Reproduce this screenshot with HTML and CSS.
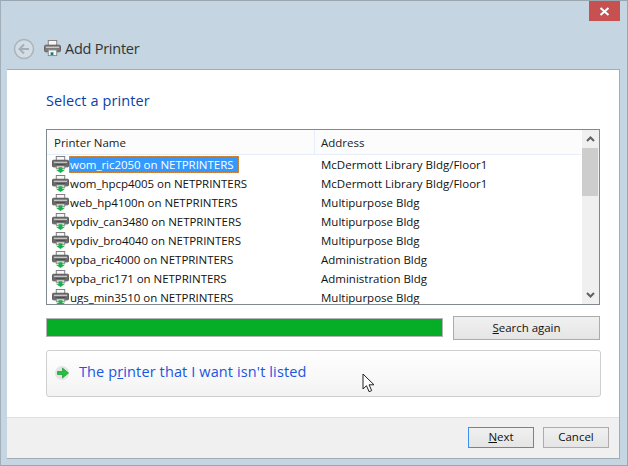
FILE: index.html
```html
<!DOCTYPE html>
<html lang="en">
<head>
<meta charset="utf-8">
<title>Add Printer</title>
<link rel="stylesheet" href="styles.css">
</head>
<body>
<svg width="0" height="0" class="defs">
  <symbol id="printer" viewBox="0 0 18 18">
    <rect x="4.500" y=".5" width="9" height="5" fill="#f6f6f6" stroke="#7a7a7a"/>
    <rect x=".5" y="4.500" width="17" height="7" rx="1" fill="#6a6a6a" stroke="#565656"/>
    <rect x="2" y="6" width="14" height="1.500" fill="#c4c4c4"/>
    <rect x="4" y="9" width="10" height="1" fill="#333"/>
    <rect x="4.500" y="10.500" width="9" height="2.500" fill="#f2f2f2" stroke="#808080"/>
    <path d="M7 12h4v2.500h3L9 18 4 14.500h3z" fill="#19b04a"/>
  </symbol>
  <symbol id="navprinter" viewBox="0 0 18 18">
    <rect x="4.500" y=".5" width="9" height="5.500" fill="#f6f6f6" stroke="#808080"/>
    <rect x=".5" y="5.500" width="17" height="7" rx="1.500" fill="#7a7a7a" stroke="#5f5f5f"/>
    <rect x="2" y="7" width="14" height="1.500" fill="#c8c8c8"/>
    <rect x="4.500" y="10.500" width="9" height="6" fill="#f6f6f6" stroke="#8a8a8a"/>
    <rect x="7" y="13" width="3" height="3" fill="#1d7f86"/>
  </symbol>
</svg>
<div class="window">
  <div class="titlebar"><div class="close"><svg width="11" height="9" viewBox="0 0 11 9"><path d="M1.500 1l8 7M9.500 1l-8 7" stroke="#fff" stroke-width="2"/></svg></div></div>
  <div class="navbar">
    <svg class="back" width="22" height="22" viewBox="0 0 22 22"><circle cx="11" cy="11" r="9.500" fill="#d3dde5" stroke="#aab4bb" stroke-width="1.500"/><path d="M16 11H7M11 6.500L6.500 11l4.500 4.500" fill="none" stroke="#a5afb6" stroke-width="2"/></svg>
    <svg class="navicon" width="17" height="17"><use href="#navprinter"/></svg>
    <span class="navtitle">Add Printer</span>
  </div>
  <div class="panel">
    <div class="content">
      <h1 class="heading">Select a printer</h1>
      <div class="listbox">
        <div class="listmain">
          <div class="header"><div class="colname">Printer Name</div><div class="coladdr">Address</div></div>
          <div class="rows">
            <div class="row"><svg class="ricon" width="17" height="17"><use href="#printer"/></svg><span class="name selected">wom_ric2050 on NETPRINTERS</span><span class="addr">McDermott Library Bldg/Floor1</span></div>
            <div class="row"><svg class="ricon" width="17" height="17"><use href="#printer"/></svg><span class="name">wom_hpcp4005 on NETPRINTERS</span><span class="addr">McDermott Library Bldg/Floor1</span></div>
            <div class="row"><svg class="ricon" width="17" height="17"><use href="#printer"/></svg><span class="name">web_hp4100n on NETPRINTERS</span><span class="addr">Multipurpose Bldg</span></div>
            <div class="row"><svg class="ricon" width="17" height="17"><use href="#printer"/></svg><span class="name">vpdiv_can3480 on NETPRINTERS</span><span class="addr">Multipurpose Bldg</span></div>
            <div class="row"><svg class="ricon" width="17" height="17"><use href="#printer"/></svg><span class="name">vpdiv_bro4040 on NETPRINTERS</span><span class="addr">Multipurpose Bldg</span></div>
            <div class="row"><svg class="ricon" width="17" height="17"><use href="#printer"/></svg><span class="name">vpba_ric4000 on NETPRINTERS</span><span class="addr">Administration Bldg</span></div>
            <div class="row"><svg class="ricon" width="17" height="17"><use href="#printer"/></svg><span class="name">vpba_ric171 on NETPRINTERS</span><span class="addr">Administration Bldg</span></div>
            <div class="row"><svg class="ricon" width="17" height="17"><use href="#printer"/></svg><span class="name">ugs_min3510 on NETPRINTERS</span><span class="addr">Multipurpose Bldg</span></div>
          </div>
        </div>
        <div class="scrollbar">
          <div class="sbtn"><svg width="9" height="6" viewBox="0 0 9 6"><path d="M1 5l3.500-3.500L8 5" fill="none" stroke="#606060" stroke-width="2"/></svg></div>
          <div class="thumb"></div>
          <div class="strack"></div>
          <div class="sbtn"><svg width="9" height="6" viewBox="0 0 9 6"><path d="M1 1l3.500 3.500L8 1" fill="none" stroke="#606060" stroke-width="2"/></svg></div>
        </div>
      </div>
      <div class="searchrow">
        <div class="progress"></div>
        <div class="btn search"><u>S</u>earch again</div>
      </div>
      <div class="notlisted">
        <svg class="arrow" width="16" height="16" viewBox="0 0 16 16"><circle cx="7" cy="8" r="7" fill="#e4e4e4"/><path d="M2.500 6.500h5V3l6 5-6 5V9.500h-5z" fill="#22c23c" stroke="#0f8f2a" stroke-width=".6"/></svg>
        <span class="linktext">The p<u>r</u>inter that I want isn't listed</span>
      </div>
    </div>
    <div class="footer">
      <div class="btn next"><span><u>N</u>ext</span></div>
      <div class="btn cancel">Cancel</div>
    </div>
  </div>
  <svg class="cursor" width="14" height="20" viewBox="0 0 14 20"><path d="M1 1v15l3.500-3.300 2.600 6 2.600-1.100-2.600-5.800h4.900z" fill="#fff" stroke="#222" stroke-width="1"/></svg>
</div>
</body>
</html>
```
FILE: styles.css
```css
* { box-sizing: border-box; }
html, body { margin: 0; padding: 0; }
body { width: 628px; height: 466px; overflow: hidden; font-family: "Open Sans", "Noto Sans", sans-serif; font-size: 11.500px; color: #111; }
.defs { position: absolute; }
.window { position: relative; width: 628px; height: 466px; display: flex; flex-direction: column; background: #c5d5e2; border: 1px solid #9aa7b1; border-left-color: #a3afb8; padding: 0 7px 6px 6px; }
.titlebar { height: 20px; display: flex; justify-content: flex-end; flex: none; }
.close { width: 31px; height: 20px; background: #c75050; display: flex; align-items: center; justify-content: center; }
.navbar { height: 48px; flex: none; display: flex; align-items: center; padding: 7px 0 0 6px; }
.back { margin-right: 9px; }
.navicon { margin-right: 4px; }
.navtitle { font-size: 14.500px; color: #333; letter-spacing: -.25px; }
.panel { flex: 1; display: flex; flex-direction: column; background: #fff; border: 1px solid #9fadb7; border-width: 1px 1px 1px 0; }
.content { flex: 1; padding: 20px 19px 0 39px; }
.heading { margin: 0 0 18px; font-weight: 400; font-size: 14.500px; line-height: 21px; color: #0a3fa8; letter-spacing: .1px; }
.listbox { height: 176px; display: flex; border: 1px solid #828790; background: #fff; }
.listmain { flex: 1; min-width: 0; overflow: hidden; }
.header { height: 25px; display: flex; background: #fcfcfc; border-bottom: 1px solid #e6eff8; margin-right: 1px; line-height: 26px; color: #222; }
.colname { width: 268px; padding-left: 7px; border-right: 1px solid #e6eff8; height: 24px; }
.coladdr { padding-left: 6px; }
.rows { height: 149px; overflow: hidden; }
.row { height: 19px; display: flex; align-items: center; padding-left: 5px; white-space: nowrap; }
.ricon { flex: none; }
.name { width: 252px; line-height: 17px; padding-left: 1px; flex: none; letter-spacing: -.03px; }
.name.selected { width: 170px; margin-right: 82px; background: #3399ff; color: #fff; outline: 1px dotted #d98a3a; outline-offset: -1px; }
.scrollbar { width: 17px; flex: none; display: flex; flex-direction: column; background: #f0f0f0; padding-right: 1px; }
.sbtn { height: 18px; display: flex; align-items: center; justify-content: center; flex: none; }
.thumb { height: 48px; background: #cdcdcd; flex: none; }
.strack { flex: 1; }
.searchrow { display: flex; justify-content: space-between; margin-top: 11px; }
.progress { width: 397px; height: 19px; margin-top: 2px; background: #06ae28; border: 1px solid #b4b4b4; }
.btn { border: 1px solid #acacac; background: linear-gradient(#f0f0f0, #e5e5e5); display: flex; align-items: center; justify-content: center; color: #111; padding-bottom: 2px; }
.search { width: 147px; height: 24px; letter-spacing: -.05px; }
.notlisted { margin-top: 10px; margin-right: -1px; height: 47px; border: 1px solid #cfcfcf; border-radius: 3px; background: linear-gradient(#fff, #f3f3f3); display: flex; align-items: center; padding: 0 0 5px 8px; }
.arrow { margin-right: 8px; margin-top: 4px; }
.linktext { font-size: 14.500px; color: #1c55e0; letter-spacing: .12px; }
.footer { height: 41px; flex: none; background: #f0f0f0; border-top: 1px solid #dfdfdf; display: flex; justify-content: flex-end; gap: 9px; padding: 9px 10px 0 0; }
.next, .cancel { width: 66px; height: 21px; }
.next { border-color: #3c8ff0; }
.cursor { position: absolute; left: 361px; top: 372px; }
```
